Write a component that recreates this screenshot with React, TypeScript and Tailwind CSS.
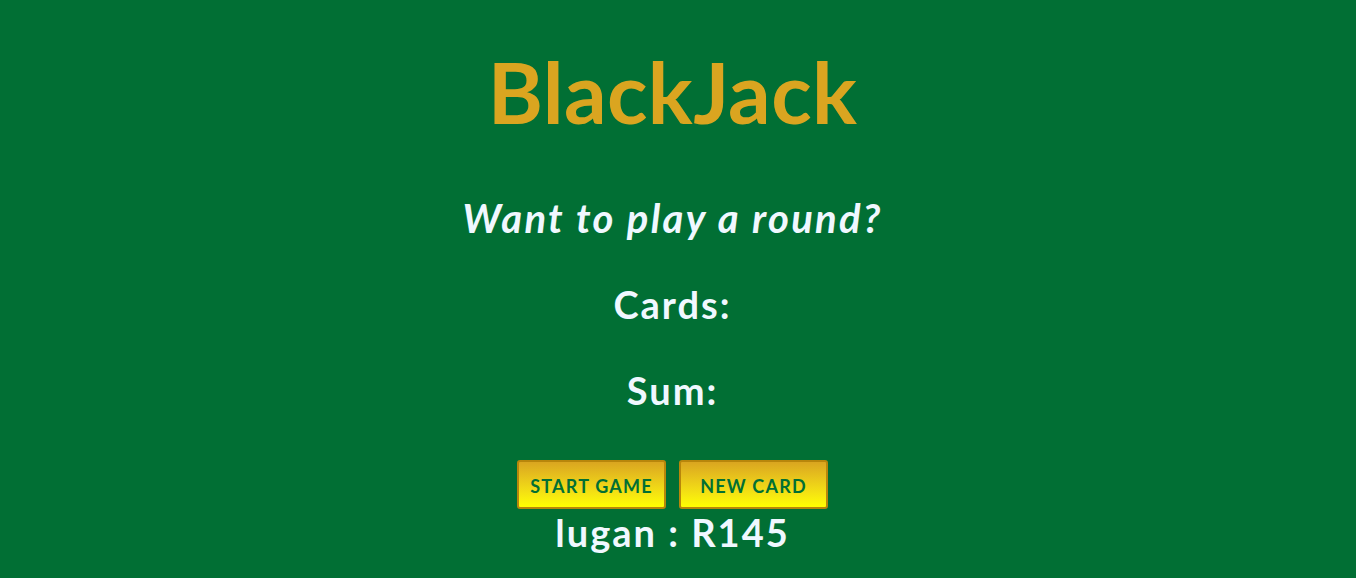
import React from 'react'

export default function App() {
  return (
    <div className="min-h-[578px] w-full bg-[#016f34] pr-[11px] text-center font-['Lato','Open_Sans',sans-serif] text-[#f0f8ff]">
      <div className="flex flex-col items-center pt-[42px]">
        <h1 className="text-[84px] font-bold leading-[100px] tracking-[0.4px] text-[#daa520]">BlackJack</h1>
        <p className="mt-[52px] text-[40px] font-bold italic leading-[48px] tracking-[2.3px]">Want to play a round?</p>
        <p className="mt-[38px] text-[38px] font-bold leading-[48px] tracking-[2px]">Cards:</p>
        <p className="mt-[38px] text-[38px] font-bold leading-[48px] tracking-[2px]">Sum:</p>
        <div className="mt-[46px] flex gap-[13px]">
          <button className="h-[49px] w-[149px] rounded-[3px] border-2 border-[#b8860b] bg-gradient-to-b from-[#daa520] to-[#ffff00] pt-[3px] text-[18px] font-bold tracking-[1.2px] text-[#016f34]">
            START GAME
          </button>
          <button className="h-[49px] w-[149px] rounded-[3px] border-2 border-[#b8860b] bg-gradient-to-b from-[#daa520] to-[#ffff00] pt-[3px] text-[18px] font-bold tracking-[1.2px] text-[#016f34]">
            NEW CARD
          </button>
        </div>
        <p className="text-[38px] font-bold leading-[46px] tracking-[2px]">lugan : R145</p>
      </div>
    </div>
  )
}
